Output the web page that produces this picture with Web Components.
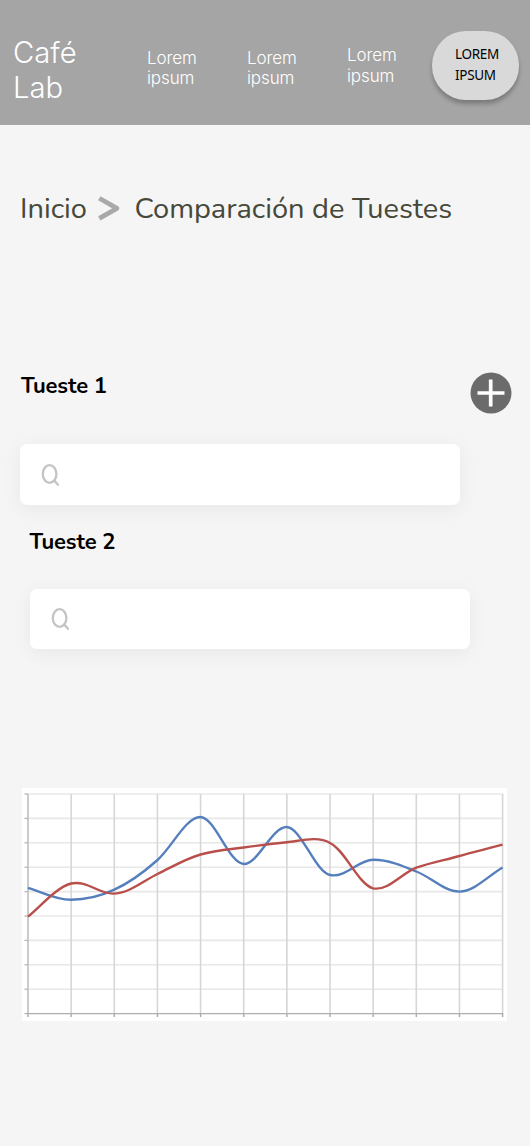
<!DOCTYPE html>
<html lang="es">
<head>
<meta charset="utf-8">
<title>Café Lab</title>
<style>
html,body{margin:0;background:#f5f5f5}
body{width:530px;height:1146px;overflow:hidden;font-family:Inter,sans-serif}
</style>
</head>
<body>
<cafe-page></cafe-page>
<script>
const define = (name, markup) => customElements.define(name, class extends HTMLElement {
  constructor() {
    super();
    const t = document.createElement('template');
    t.innerHTML = markup;
    this.attachShadow({mode: 'open'}).append(t.content.cloneNode(true));
  }
});

define('nav-link', `<style>
:host{display:block;width:60px;font:350 17px/20.5px Inter,sans-serif;letter-spacing:-.1px;color:#fff}
</style><slot></slot>`);

define('pill-button', `<style>
:host{display:block}
button{display:block;box-sizing:border-box;width:87px;height:69px;border:0;border-radius:34px;padding:0 0 2px 23px;margin:0;background:#d9d9d9;color:#000;text-align:left;font:400 13.5px/20.5px "Noto Sans",sans-serif;letter-spacing:-.3px;box-shadow:0 4px 4px rgba(0,0,0,.25)}
</style><button><slot></slot></button>`);

define('site-header', `<style>
:host{display:block;height:125px;background:#a5a5a5}
header{display:grid;grid-template-columns:134px 100px 100px 85px 87px;padding:31px 0 0 13px;align-items:start}
.brand{font:350 29.2px/35px Inter,sans-serif;color:#fff;width:80px;padding-top:4px}
nav{display:contents}
nav-link{margin-top:16.5px}
nav-link:last-child{margin-top:14.4px}
</style><header><div class="brand">Café Lab</div><nav><nav-link>Lorem ipsum</nav-link><nav-link>Lorem ipsum</nav-link><nav-link>Lorem ipsum</nav-link></nav><pill-button>LOREM<br>IPSUM</pill-button></header>`);

define('bread-crumb', `<style>
:host{display:flex;height:40px;color:#46483a;font:400 29px/40px Nunito,Lato,sans-serif;white-space:nowrap}
svg{display:block;width:24px;height:28px;margin:6px 0 0 10px}
.a{width:67px}.b{margin-left:13.5px}
</style><span class="a">Inicio</span><svg viewBox="0 0 24 28"><path d="M2.3 3.2 20 13.4 2.3 23.4" fill="none" stroke="#a9a9a9" stroke-width="4.7" stroke-linejoin="round"/></svg><span class="b">Comparación de Tuestes</span>`);

define('search-field', `<style>
:host{display:flex;box-sizing:border-box;width:440px;height:60.5px;background:#fff;border-radius:7px;box-shadow:0 4px 20px rgba(0,0,0,.06);padding:18.5px 0 0 21px}
svg{width:20px;height:24px}
</style><svg viewBox="0 0 20 24"><g fill="none" stroke="#c4c4c4" stroke-width="2.3"><ellipse cx="8.6" cy="11" rx="6.8" ry="8.9"/><path d="m13.2 17.6 3.8 4.2" stroke-linecap="round"/></g></svg>`);

define('roast-field', `<style>
:host{display:block}
h2{margin:0 0 0 var(--label-shift,0);font:700 22px/30px Nunito,Lato,sans-serif;color:#000;letter-spacing:-.1px}
search-field{margin-top:var(--field-gap,44px)}
</style><h2><slot></slot></h2><search-field></search-field>`);

define('add-button', `<style>
:host{display:block}
button{display:block;padding:0;border:0;background:none}
svg{display:block;width:42px;height:42px}
</style><button aria-label="Añadir"><svg viewBox="0 0 42 42"><circle cx="21" cy="21" r="20.5" fill="#6b6b6b"/><path d="M7.5 21h27M20.7 7.5v27" stroke="#fff" stroke-width="3.7"/></svg></button>`);

define('roast-chart', `<style>
:host{display:block;width:485px;height:233px;background:#fff}
svg{display:block}
</style><svg width="485" height="233" viewBox="22 788 485 233" fill="none">
<g id="grid"></g>
<path d="M28 887.8C42 892 55 899.8 71 899.8C86 899.8 101 896 114.3 889.7C129 883 144 872 157.5 860C172 847 186 817 200.3 817C215 817 229 864 244 864C258 864 272 827 286.5 827C301 827 315 872 330 875C346 878 358 860 373 859.8C388 859.6 402 865.5 416.3 871.5C431 877 444 891.6 459.5 891.6C474 891.6 488 876 502.6 867.5" stroke="#557fbc" stroke-width="2.4"/>
<path d="M28 916.7C42 905 56 887.8 71 883.5C87 880 98 893.6 113 893.6C129 893.6 143 881 157.5 874C172 867 186 858.5 200.6 854.5C215 850.5 229 849.5 243.8 847.5C258 845.5 273 843.7 286.9 842.3C300 841 318 835.5 330 843C345 850 358 884 373 888.3C388 891.5 402 873 416.3 867.6C430 863 445 860 459.5 856C474 852 488 848.6 502.6 844.6" stroke="#b84f4b" stroke-width="2.4"/>
</svg>`);

function drawGrid(chart) {
  let s = '';
  for (let i = 0; i < 10; i++) {
    const y = 794 + i * 24.4;
    s += `<path d="M28 ${y}H503" stroke="${i === 9 ? '#adafae' : '#e8e8e8'}" stroke-width="${i === 9 ? 1.3 : 1.6}"/><path d="M24.5 ${y}H28" stroke="#b5b5b5" stroke-width="1.3"/>`;
  }
  for (let i = 0; i < 12; i++) {
    const x = 28 + i * 43.145;
    s += `<path d="M${x} 794V1013.6" stroke="${i ? '#d6d6d6' : '#bebebe'}" stroke-width="1.6"/><path d="M${x} 1013V1017" stroke="#aaa" stroke-width="1.4"/>`;
  }
  chart.shadowRoot.getElementById('grid').innerHTML = s;
}

define('cafe-page', `<style>
:host{display:block;width:530px;height:1146px;background:#f5f5f5}
bread-crumb{margin:64px 0 0 20px}
.first{display:flex;justify-content:space-between;margin:142px 18px 0 20px}
.first roast-field{--label-shift:1px;--field-gap:43px}
add-button{margin-top:1px}
.second{margin:22px 0 0 30px;--field-gap:32px;--label-shift:-.5px}
roast-chart{margin:139px 0 0 22px}
</style><site-header></site-header><bread-crumb></bread-crumb>
<div class="first"><roast-field>Tueste 1</roast-field><add-button></add-button></div>
<roast-field class="second">Tueste 2</roast-field>
<roast-chart></roast-chart>`);
drawGrid(document.querySelector('cafe-page').shadowRoot.querySelector('roast-chart'));
</script>
</body>
</html>
